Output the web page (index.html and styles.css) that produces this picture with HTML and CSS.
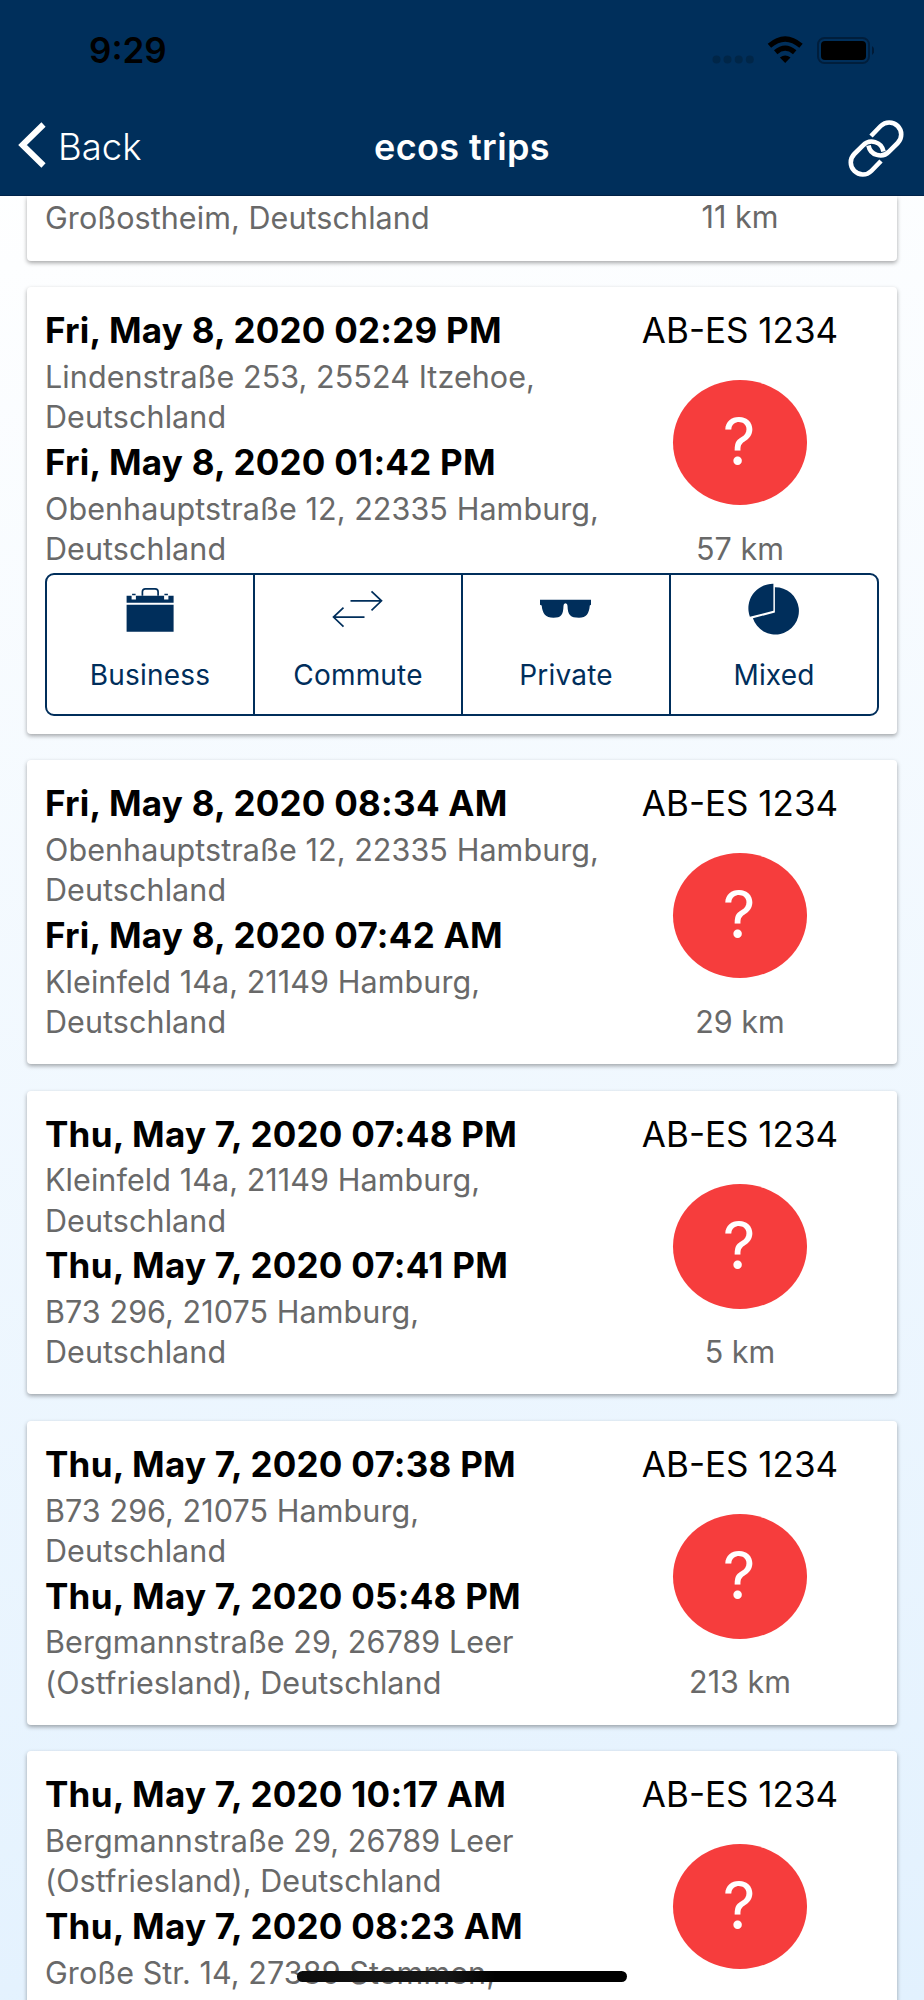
FILE: index.html
```html
<!DOCTYPE html>
<html lang="en">
<head>
<meta charset="utf-8">
<title>ecos trips</title>
<link rel="stylesheet" href="styles.css">
</head>
<body>
<div class="screen">
  <header class="header">
    <div class="status">
      <span class="time">9:29</span>
      <svg class="status-icons" width="162" height="30" viewBox="0 0 162 30">
        <g fill="#002648"><circle cx="4.500" cy="24.500" r="4"/><circle cx="15.500" cy="24.500" r="4"/><circle cx="26.700" cy="24.500" r="4"/><circle cx="37.800" cy="24.500" r="4"/></g>
        <g fill="none" stroke="#000" stroke-width="5.200"><path d="M57.400 10.800Q73.200-2.800 89 10.800"/><path d="M63.700 17.300Q73.200 9 82.700 17.300"/></g>
        <path d="M67.900 22.600Q73.200 18.200 78.500 22.600L73.200 28Z"/>
        <rect x="106" y="3" width="51" height="25" rx="6.500" fill="none" stroke="#001e3c" stroke-width="2"/>
        <rect x="109" y="6" width="45" height="19" rx="4"/>
        <path d="M160 11v9q5-4.500 0-9" fill="#001a36"/>
      </svg>
    </div>
    <nav class="nav">
      <a class="back">
        <svg width="30" height="50" viewBox="0 0 30 50"><path d="M26.500 4.500L5.500 25L26.500 45.500" fill="none" stroke="#fff" stroke-width="6"/></svg>
        <span>Back</span>
      </a>
      <h1 class="title">ecos trips</h1>
      <svg class="link" width="58" height="58" viewBox="0 0 58 58">
        <g fill="none" stroke="#fff" stroke-width="4.600">
          <path d="M24 17L33.700 7A12 12 0 0 1 50.700 24L42 32.700A12 12 0 0 1 21.500 26.500"/>
          <path d="M34 42L24.300 52A12 12 0 0 1 7.300 35L16 26.300A12 12 0 0 1 36.500 32.500"/>
        </g>
      </svg>
    </nav>
  </header>
  <main class="list">
    <article class="card first">
      <div class="info"><p class="addr">Großostheim, Deutschland</p></div>
      <div class="side"><span class="km">11 km</span></div>
    </article>
    <article class="card">
      <div class="info">
        <h2 class="date">Fri, May 8, 2020 02:29 PM</h2>
        <p class="addr">Lindenstraße 253, 25524 Itzehoe,<br>Deutschland</p>
        <h2 class="date">Fri, May 8, 2020 01:42 PM</h2>
        <p class="addr">Obenhauptstraße 12, 22335 Hamburg,<br>Deutschland</p>
      </div>
      <div class="side"><span class="plate">AB-ES 1234</span><span class="badge">?</span><span class="km">57 km</span></div>
      <div class="types">
        <button class="type">
          <svg width="52" height="56" viewBox="0.900 -0.800 52 56"><path d="M19.300 12V8q0-3 3-3h9.700q3 0 3 3v4" fill="none" stroke="#002e5b" stroke-width="1.700"/><path d="M3.500 12H8.500V15.700H12.800V12H41V15.700H45.300V12H50.500V19H3.500zM3.500 21h47v27H3.500zM9 10h3.500v1.500H9zM41.300 10h3.500v1.500h-3.500z" fill="#002e5b"/></svg>
          Business
        </button>
        <button class="type">
          <svg width="52" height="56" viewBox="0.500 -0.800 52 56"><path d="M19 17H50M40 7.500L50 17L40 26.500M33 33.300H2M12 23.800L2 33.300L12 42.800" fill="none" stroke="#002e5b" stroke-width="1.700"/></svg>
          Commute
        </button>
        <button class="type">
          <svg width="52" height="56" viewBox="0.500 -0.800 52 56"><path d="M.5 16H51.500V21L50.300 21.800C49.500 30 47 34 39.500 34C31 34 28.300 31.500 28 22Q28 19.500 26 19.500Q24 19.500 24 22C23.700 31.500 21.500 34 14 34C6 34 3 30 2.200 21.800L.5 21Z" fill="#002e5b"/></svg>
          Private
        </button>
        <button class="type">
          <svg width="52" height="56" viewBox="0.600 -0.800 52 56"><path d="M26 0V27L2.500 33A24.500 24.500 0 0 1 26 0ZM27.500 3.500A23.600 23.600 0 1 1 5.500 34.500L27.500 28.700Z" fill="#002e5b"/></svg>
          Mixed
        </button>
      </div>
    </article>
    <article class="card">
      <div class="info">
        <h2 class="date">Fri, May 8, 2020 08:34 AM</h2>
        <p class="addr">Obenhauptstraße 12, 22335 Hamburg,<br>Deutschland</p>
        <h2 class="date">Fri, May 8, 2020 07:42 AM</h2>
        <p class="addr">Kleinfeld 14a, 21149 Hamburg,<br>Deutschland</p>
      </div>
      <div class="side"><span class="plate">AB-ES 1234</span><span class="badge">?</span><span class="km">29 km</span></div>
    </article>
    <article class="card">
      <div class="info">
        <h2 class="date">Thu, May 7, 2020 07:48 PM</h2>
        <p class="addr">Kleinfeld 14a, 21149 Hamburg,<br>Deutschland</p>
        <h2 class="date">Thu, May 7, 2020 07:41 PM</h2>
        <p class="addr">B73 296, 21075 Hamburg,<br>Deutschland</p>
      </div>
      <div class="side"><span class="plate">AB-ES 1234</span><span class="badge">?</span><span class="km">5 km</span></div>
    </article>
    <article class="card">
      <div class="info">
        <h2 class="date">Thu, May 7, 2020 07:38 PM</h2>
        <p class="addr">B73 296, 21075 Hamburg,<br>Deutschland</p>
        <h2 class="date">Thu, May 7, 2020 05:48 PM</h2>
        <p class="addr">Bergmannstraße 29, 26789 Leer<br>(Ostfriesland), Deutschland</p>
      </div>
      <div class="side"><span class="plate">AB-ES 1234</span><span class="badge">?</span><span class="km">213 km</span></div>
    </article>
    <article class="card">
      <div class="info">
        <h2 class="date">Thu, May 7, 2020 10:17 AM</h2>
        <p class="addr">Bergmannstraße 29, 26789 Leer<br>(Ostfriesland), Deutschland</p>
        <h2 class="date">Thu, May 7, 2020 08:23 AM</h2>
        <p class="addr">Große Str. 14, 27389 Stemmen,</p>
      </div>
      <div class="side"><span class="plate">AB-ES 1234</span><span class="badge">?</span></div>
    </article>
  </main>
  <div class="home"></div>
</div>
</body>
</html>
```

FILE: styles.css
```css
* { box-sizing: border-box; }
body { margin: 0; }
.screen {
  position: relative;
  width: 924px;
  height: 2000px;
  overflow: hidden;
  display: flex;
  flex-direction: column;
  font-family: Inter, "Liberation Sans", sans-serif;
  background: linear-gradient(172deg, #fff 6%, #e2f1fe 100%);
}
h1, h2, p { margin: 0; }
.header { flex: none; height: 196px; background: #002f5b; border-bottom: 1px solid #00234a; }
.status { display: flex; justify-content: space-between; height: 100px; padding: 29px 50px 0 89px; }
.time { font-size: 35px; font-weight: 600; line-height: 43px; color: #000; }
.status-icons { margin-top: 6px; }
.nav { display: grid; grid-template-columns: 1fr auto 1fr; height: 95px; padding: 0 19px 0 17px; color: #fff; }
.back { display: flex; gap: 11px; padding-top: 20px; font-size: 36.500px; font-weight: 350; line-height: 54px; }
.title { font-size: 36px; font-weight: 600; line-height: 54px; padding: 20px 0 0 2px; letter-spacing: .4px; }
.link { justify-self: end; margin-top: 19px; }
.list { display: flex; flex-direction: column; gap: 26.500px; padding: 0 27px; }
.card {
  flex: none;
  display: grid;
  grid-template-columns: 567px 256px;
  justify-content: start;
  min-height: 303.800px;
  padding: 18px 18px 0;
  background: #fff;
  border-radius: 4px;
  box-shadow: 0 2px 4px rgba(0, 0, 0, .34);
}
.card.first { min-height: 0; height: 64.500px; padding-top: 1px; border-radius: 0 0 4px 4px; }
.date { font-size: 35px; font-weight: 700; line-height: 50.500px; letter-spacing: .25px; white-space: nowrap; }
.addr, .km { font-size: 30.500px; line-height: 40.300px; color: #696969; white-space: nowrap; }
.addr { margin: 1.300px 0 -.7px; letter-spacing: .08px; }
.side { display: flex; flex-direction: column; align-items: center; }
.plate { font-size: 35px; line-height: 50.500px; }
.badge {
  width: 134px;
  height: 125px;
  margin: 24.500px 0 23.500px;
  border-radius: 50%;
  background: #f63d3d;
  color: #fff;
  font-size: 64px;
  line-height: 124px;
  text-align: center;
  text-indent: -2px;
}
.types {
  grid-column: 1 / -1;
  display: flex;
  width: 834px;
  height: 143px;
  margin: 4px 0 18px;
  border: 2px solid #002e5b;
  border-radius: 9px;
}
.type {
  flex: 1;
  display: flex;
  flex-direction: column;
  align-items: center;
  padding: 8px 0 0;
  border: 0;
  border-left: 2px solid #002e5b;
  background: none;
  color: #002e5b;
  font: 400 28px/34px Inter, sans-serif;
  letter-spacing: .18px;
}
.type:first-child { border-left: 0; }
.type svg { margin-bottom: 19px; }
.home {
  position: absolute;
  left: 297px;
  top: 1971px;
  width: 330px;
  height: 11px;
  border-radius: 6px;
  background: linear-gradient(90deg, #0c0c0c, #151515 45%, #000 60%);
}
```
